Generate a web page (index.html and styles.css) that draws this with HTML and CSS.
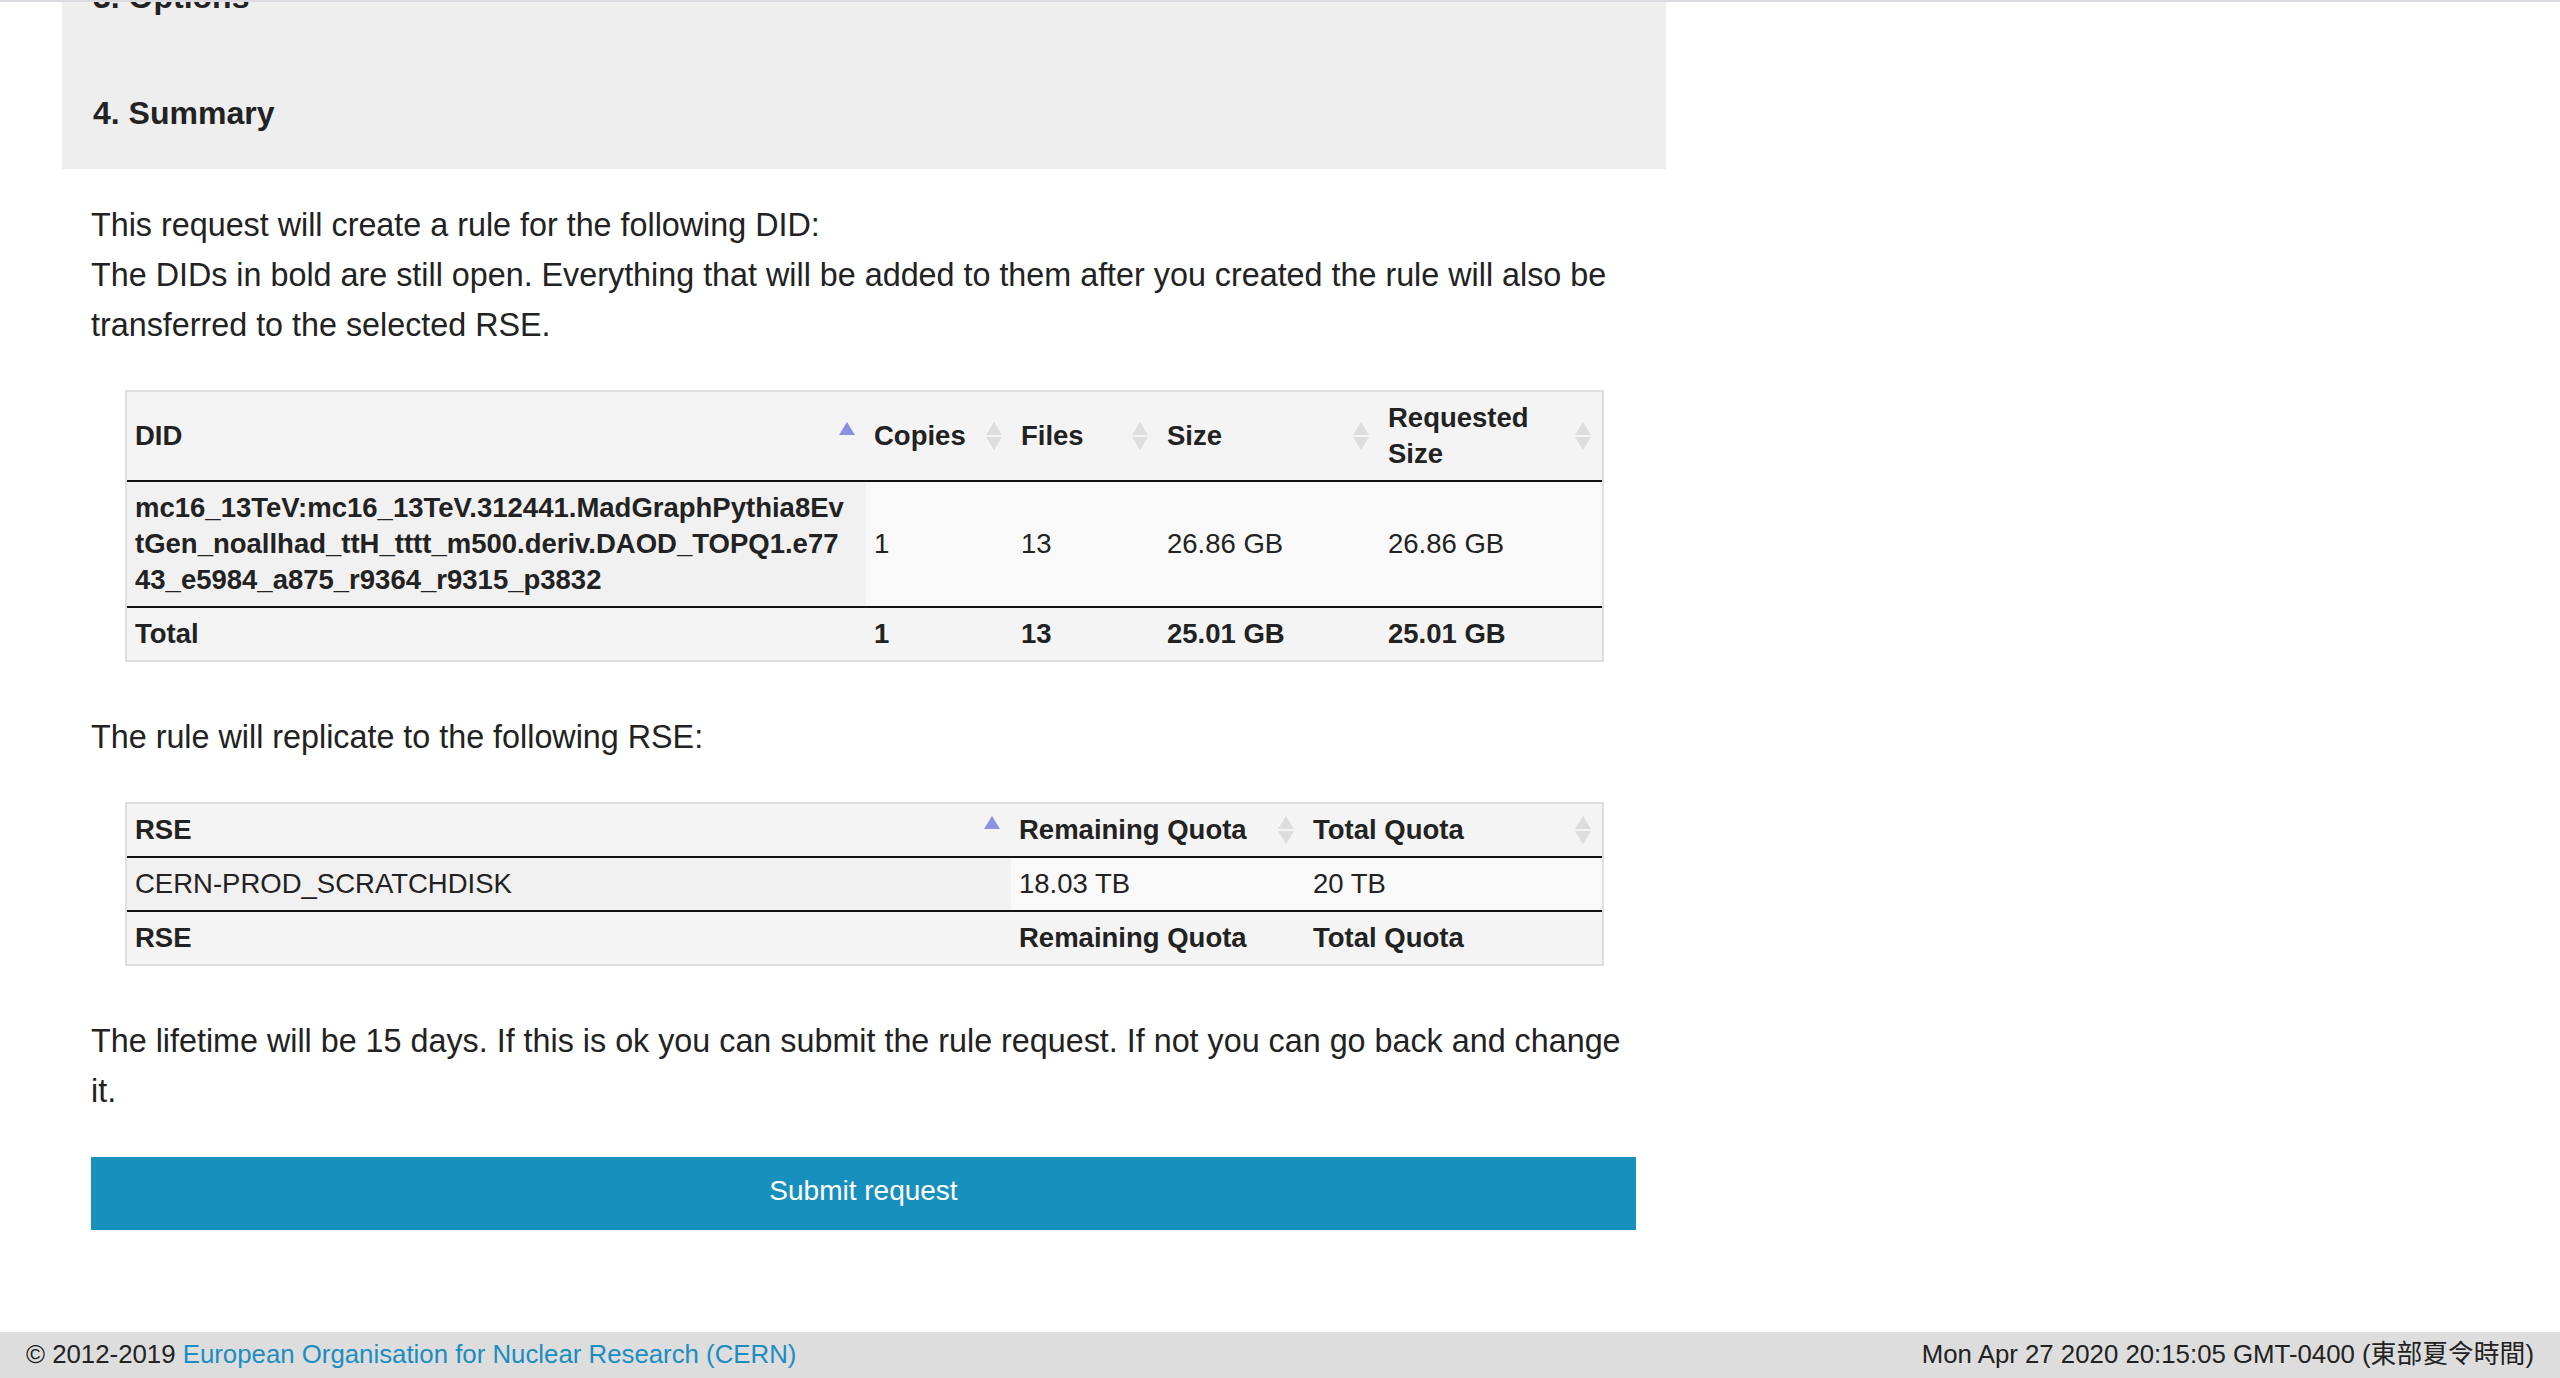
FILE: index.html
```html
<!DOCTYPE html>
<html lang="en">
<head>
<meta charset="utf-8">
<title>Rucio - Request rule</title>
<link rel="stylesheet" href="styles.css">
</head>
<body>
<div class="topline"></div>
<main class="page">
  <section class="steps">
    <h4 class="step-title">3. Options</h4>
    <h4 class="step-title step-current">4. Summary</h4>
  </section>

  <section class="summary">
    <div class="text">
      <div>This request will create a rule for the following DID:</div>
      <div>The DIDs in bold are still open. Everything that will be added to them after you created the rule will also be transferred to the selected RSE.</div>
    </div>

    <div class="table-wrap">
      <table class="dt dt-dids">
        <colgroup>
          <col class="c-did"><col class="c-copies"><col class="c-files"><col class="c-size"><col class="c-req">
        </colgroup>
        <thead>
          <tr>
            <th><div class="th-in"><span>DID</span><svg class="sort" viewBox="0 0 18 32" width="18" height="32"><path class="tri-asc" d="M9 2 L17 15 H1 Z"/></svg></div></th>
            <th><div class="th-in"><span>Copies</span><svg class="sort" viewBox="0 0 18 32" width="18" height="32"><path class="tri-off" d="M9 2 L17 15 H1 Z"/><path class="tri-off" d="M1 17 H17 L9 30 Z"/></svg></div></th>
            <th><div class="th-in"><span>Files</span><svg class="sort" viewBox="0 0 18 32" width="18" height="32"><path class="tri-off" d="M9 2 L17 15 H1 Z"/><path class="tri-off" d="M1 17 H17 L9 30 Z"/></svg></div></th>
            <th><div class="th-in"><span>Size</span><svg class="sort" viewBox="0 0 18 32" width="18" height="32"><path class="tri-off" d="M9 2 L17 15 H1 Z"/><path class="tri-off" d="M1 17 H17 L9 30 Z"/></svg></div></th>
            <th><div class="th-in"><span>Requested Size</span><svg class="sort" viewBox="0 0 18 32" width="18" height="32"><path class="tri-off" d="M9 2 L17 15 H1 Z"/><path class="tri-off" d="M1 17 H17 L9 30 Z"/></svg></div></th>
          </tr>
        </thead>
        <tbody>
          <tr>
            <td class="sorted did open">mc16_13TeV:mc16_13TeV.312441.MadGraphPythia8EvtGen_noallhad_ttH_tttt_m500.deriv.DAOD_TOPQ1.e7743_e5984_a875_r9364_r9315_p3832</td>
            <td>1</td>
            <td>13</td>
            <td>26.86 GB</td>
            <td>26.86 GB</td>
          </tr>
        </tbody>
        <tfoot>
          <tr>
            <th>Total</th>
            <th>1</th>
            <th>13</th>
            <th>25.01 GB</th>
            <th>25.01 GB</th>
          </tr>
        </tfoot>
      </table>
    </div>

    <div class="text">The rule will replicate to the following RSE:</div>

    <div class="table-wrap">
      <table class="dt dt-rses">
        <colgroup>
          <col class="c-rse"><col class="c-remaining"><col class="c-total">
        </colgroup>
        <thead>
          <tr>
            <th><div class="th-in"><span>RSE</span><svg class="sort" viewBox="0 0 18 32" width="18" height="32"><path class="tri-asc" d="M9 2 L17 15 H1 Z"/></svg></div></th>
            <th><div class="th-in"><span>Remaining Quota</span><svg class="sort" viewBox="0 0 18 32" width="18" height="32"><path class="tri-off" d="M9 2 L17 15 H1 Z"/><path class="tri-off" d="M1 17 H17 L9 30 Z"/></svg></div></th>
            <th><div class="th-in"><span>Total Quota</span><svg class="sort" viewBox="0 0 18 32" width="18" height="32"><path class="tri-off" d="M9 2 L17 15 H1 Z"/><path class="tri-off" d="M1 17 H17 L9 30 Z"/></svg></div></th>
          </tr>
        </thead>
        <tbody>
          <tr>
            <td class="sorted">CERN-PROD_SCRATCHDISK</td>
            <td>18.03 TB</td>
            <td>20 TB</td>
          </tr>
        </tbody>
        <tfoot>
          <tr>
            <th>RSE</th>
            <th>Remaining Quota</th>
            <th>Total Quota</th>
          </tr>
        </tfoot>
      </table>
    </div>

    <div class="text">The lifetime will be 15 days. If this is ok you can submit the rule request. If not you can go back and change it.</div>

    <button class="submit" type="button">Submit request</button>
  </section>
</main>

<footer class="footer">
  <div class="copyright">© 2012-2019 <a href="#" class="footer-link">European Organisation for Nuclear Research (CERN)</a></div>
  <div class="clock">Mon Apr 27 2020 20:15:05 GMT-0400 (東部夏令時間)</div>
</footer>
</body>
</html>
```

FILE: styles.css
```css
html, body {
  margin: 0;
  padding: 0;
}

body {
  display: flex;
  flex-direction: column;
  min-height: 100vh;
  background: #ffffff;
  color: #222222;
  font-family: "Liberation Sans", Helvetica, Arial, "Noto Sans CJK TC", sans-serif;
}

.topline {
  position: fixed;
  top: 0;
  left: 0;
  right: 0;
  height: 2px;
  background: #dcdce0;
  z-index: 10;
}

.page {
  display: block;
}

/* Wizard step panel (scrolled partly out of view) */
.steps {
  margin: -21px 0 0 62px;
  width: 1604px;
  box-sizing: border-box;
  padding: 0 31px 38px 31px;
  background: #eeeeee;
}

.step-title {
  margin: 0;
  font-size: 32px;
  line-height: 36px;
  font-weight: bold;
  color: #222222;
}

.step-current {
  margin-top: 80px;
}

/* Summary content */
.summary {
  margin-left: 91px;
  width: 1545px;
  padding-top: 31px;
}

.text {
  font-size: 32.3px;
  line-height: 50px;
}

.table-wrap {
  margin: 40px 0 50px 34px;
}

.dt {
  width: 1479px;
  table-layout: fixed;
  border-collapse: separate;
  border-spacing: 0;
  border: 2px solid #dedede;
  font-size: 27.5px;
  line-height: 36px;
  color: #222222;
}

.c-did { width: 739px; }
.c-copies { width: 147px; }
.c-files { width: 146px; }
.c-size { width: 221px; }
.c-req { width: 222px; }

.c-rse { width: 884px; }
.c-remaining { width: 294px; }
.c-total { width: 297px; }

.dt thead th {
  background: #f4f4f4;
  text-align: left;
  font-weight: bold;
  padding: 8px 10px 8px 8px;
  vertical-align: middle;
  border-bottom: 2px solid #111111;
}

.th-in {
  display: flex;
  align-items: center;
  justify-content: space-between;
  gap: 8px;
}

.sort {
  flex: 0 0 18px;
  display: block;
}

.tri-asc { fill: #8b8fe6; }
.tri-off { fill: #dddddd; }

.dt tbody td {
  background: #f9f9f9;
  padding: 8px 11px 8px 8px;
  vertical-align: middle;
  text-align: left;
}

.dt tbody td.sorted {
  background: #f1f1f1;
}

.dt tbody td.did {
  word-break: break-all;
  padding-right: 16px;
}

.open {
  font-weight: bold;
}

.dt tfoot th {
  background: #f4f4f4;
  text-align: left;
  font-weight: bold;
  padding: 8px 10px 8px 8px;
  border-top: 2px solid #111111;
}

.submit {
  display: block;
  width: 100%;
  height: 73px;
  margin: 41px 0 0 0;
  padding: 0 0 5px 0;
  border: 0;
  background: #1890bd;
  color: #ffffff;
  font-family: "Liberation Sans", Helvetica, Arial, sans-serif;
  font-size: 28px;
  cursor: pointer;
}

/* Footer */
.footer {
  margin-top: auto;
  display: flex;
  justify-content: space-between;
  align-items: flex-start;
  height: 46px;
  box-sizing: border-box;
  padding: 4px 26px 6px 26px;
  background: #dddddd;
  font-size: 25.8px;
  line-height: 36px;
  color: #222222;
}

.footer-link {
  color: #1b8dc0;
  text-decoration: none;
}

.clock {
  font-family: "Liberation Sans", Helvetica, Arial, "Noto Sans CJK TC", sans-serif;
}
```
